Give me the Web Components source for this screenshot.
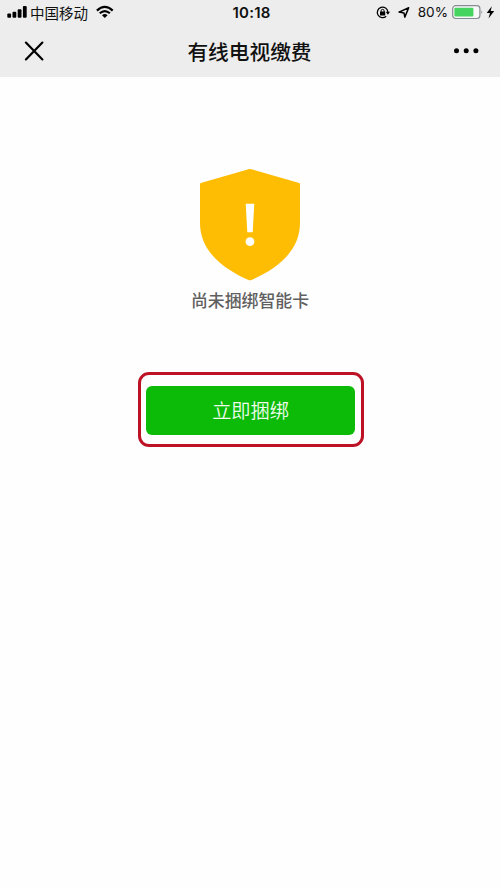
<!DOCTYPE html>
<html lang="zh-CN">
<head>
<meta charset="utf-8">
<title>有线电视缴费</title>
<style>
body{margin:0;background:#fefefe;font-family:Inter,"Noto Sans CJK SC",sans-serif;color:#111}
</style>
</head>
<body>
<payment-page></payment-page>
<script>
const define=(name,html)=>{
  const t=document.createElement('template');
  t.innerHTML=html;
  customElements.define(name,class extends HTMLElement{
    constructor(){super();this.attachShadow({mode:'open'}).append(t.content.cloneNode(true));}
  });
};

define('status-bar',`
<style>
:host{display:grid;grid-template-columns:1fr auto 1fr;align-items:center;height:25px;padding:0 4px 0 7px;box-sizing:border-box;line-height:25px}
svg{display:block;flex:none}
.left,.right{display:flex;align-items:center}
.right{justify-content:flex-end}
.carrier{font:400 14.5px/24px "Noto Sans CJK SC",sans-serif;margin:0 8px 0 2px;white-space:nowrap}
.time{font-size:15px;font-weight:600;letter-spacing:.2px}
.pct{font-size:13.6px;margin:0 4px 0 8px}
</style>
<div class="left">
 <svg width="21" height="25" viewBox="0 0 21 25" fill="#000"><rect x="0.3" y="13.5" width="3.8" height="4.3" rx="1"/><rect x="5.5" y="11.8" width="3.8" height="6" rx="1"/><rect x="10.7" y="9.2" width="3.8" height="8.6" rx="1"/><rect x="15.9" y="6" width="3.8" height="11.8" rx="1"/></svg>
 <span class="carrier">中国移动</span>
 <svg width="18" height="25" viewBox="0 0 18 25" fill="none" stroke="#000" stroke-width="2.2"><path d="M.9 10.6Q8.8 3.3 16.7 10.6M3.7 13.3Q8.8 8.8 13.9 13.3"/><path d="M6 15.2Q8.8 12.8 11.6 15.2L8.8 18Z" fill="#000" stroke="none"/></svg>
</div>
<span class="time">10:18</span>
<div class="right">
 <svg width="14" height="25" viewBox="0 0 14 25"><path d="M10.2 16.3A5.3 5.3 0 1 1 11.9 12" fill="none" stroke="#000" stroke-width="1.3"/><path d="M9.7 11.7h4.3l-2.1 3z"/><rect x="4" y="11.5" width="5.2" height="4" rx=".5"/><path d="M5.1 12v-1.2a1.5 1.5 0 0 1 3 0V12" fill="none" stroke="#000" stroke-width="1"/></svg>
 <svg width="12" height="25" viewBox="0 0 12 25" style="margin-left:8px"><path d="M1 12.1L10.7 7.7 6.8 17.1 6 12.9Z" fill="none" stroke="#000" stroke-width="1.5" stroke-linejoin="round"/></svg>
 <span class="pct">80%</span>
 <svg width="44" height="25" viewBox="0 0 44 25"><rect x=".7" y="5.7" width="27.2" height="12.8" rx="3" fill="#f8f8f8" stroke="#858b92" stroke-width="1.2"/><rect x="2.4" y="7.7" width="19" height="8.8" rx="1" fill="#44d45f"/><path d="M29.4 10.3q1.8 1.9 0 3.8z" fill="#858b92"/><path d="M39.8 6.2L34.7 12.9H38L36.5 18.4 42.2 11.1H38.7Z"/></svg>
</div>`);

define('nav-bar',`
<style>
:host{display:grid;grid-template-columns:1fr auto 1fr;align-items:center;height:52px;padding:0 21px 0 24px;box-sizing:border-box}
svg{display:block}
svg:last-child{justify-self:end}
h1{margin:0 4px 0 0;font:500 20.7px/50px "Noto Sans CJK SC",sans-serif;color:#111}
</style>
<svg width="25" height="52" viewBox="0 0 25 52"><path d="M1.9 17.6L18.4 34.4M18.4 17.6L1.9 34.4" fill="none" stroke="#000" stroke-width="2.2" stroke-linecap="round"/></svg>
<h1><slot></slot></h1>
<svg width="25" height="52" viewBox="0 0 25 52"><circle cx="2.5" cy="25.8" r="2.5"/><circle cx="12.2" cy="25.8" r="2.5"/><circle cx="21.9" cy="25.8" r="2.5"/></svg>`);

define('warning-shield',`
<style>:host{display:block}svg{display:block}</style>
<svg width="100" height="112" viewBox="0 0 100 112"><path d="M48.5 .3Q50 -.2 51.5 .3L99.2 14Q100 14.3 100 15.5V54C100 84 74 101 51.5 111Q50 111.7 48.5 111C26 101 0 84 0 54V15.5Q0 14.3 .8 14Z" fill="#febc02"/><path d="M45.7 34.7H54.3L52.7 63.3H47.3Z" fill="#fff"/><circle cx="50" cy="72.7" r="4.4" fill="#fff"/></svg>`);

define('action-button',`
<style>
:host{display:block;box-sizing:border-box;width:226px;height:75px;border:3px solid #bd1225;border-radius:11px;padding:11px 6px 9px 5px}
button{display:block;width:209px;height:49px;padding:0;border:0;border-radius:6px;background:#0cbb08;color:#effbed;font:350 19.2px/49px "Noto Sans CJK SC",sans-serif}
</style>
<button><slot></slot></button>`);

define('payment-page',`
<style>
:host{display:flex;flex-direction:column;min-height:889px}
header{background:#ededed}
main{display:flex;flex-direction:column;align-items:center;padding-top:92px}
p{margin:6px 0 60px;font:500 16.9px/25px "Noto Sans CJK SC",sans-serif;color:#606060}
action-button{margin-left:2px}
</style>
<header><status-bar></status-bar><nav-bar>有线电视缴费</nav-bar></header>
<main><warning-shield></warning-shield><p>尚未捆绑智能卡</p><action-button>立即捆绑</action-button></main>`);
</script>
</body>
</html>
